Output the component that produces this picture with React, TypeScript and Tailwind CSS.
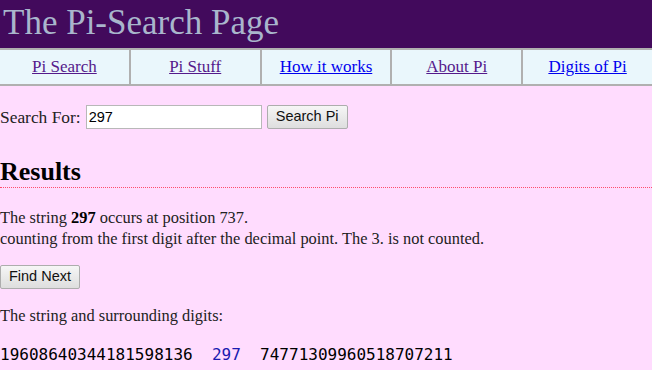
const navItems = [
  { label: "Pi Search", visited: true },
  { label: "Pi Stuff", visited: true },
  { label: "How it works", visited: false },
  { label: "About Pi", visited: true },
  { label: "Digits of Pi", visited: false },
];

const serif = "font-['Liberation_Serif','Times_New_Roman',serif]";
const sans = "font-['Liberation_Sans',Arial,sans-serif]";

export default function App() {
  return (
    <div className={`min-h-[370px] w-[652px] bg-[#ffdcfe] text-black ${serif}`}>
      <header className="h-12 bg-[#420a5c] pl-[3px]">
        <h1 className="text-[35px] leading-[46px] text-[#a9b6cc]">The Pi-Search Page</h1>
      </header>

      <nav className="flex h-[38px] border-y-2 border-[#b0b0b0] bg-[#eaf7fc]">
        {navItems.map((item, i) => (
          <a
            key={item.label}
            href="#"
            className={`flex flex-1 items-center justify-center text-[17px] underline ${
              i > 0 ? "border-l-2 border-[#b0b0b0]" : ""
            } ${item.visited ? "text-[#551a8b]" : "text-[#0000ee]"}`}
          >
            {item.label}
          </a>
        ))}
      </nav>

      <form className="mt-[18px] flex items-center gap-[5px]">
        <label className="text-[17.4px] text-[#222]">Search For:</label>
        <input
          defaultValue="297"
          className={`h-6 w-[176px] border border-[#b8b8b8] bg-white px-[2px] text-[14.5px] text-black outline-none ${sans}`}
        />
        <button
          type="button"
          className={`h-6 w-[81px] rounded-[2px] border border-[#adadad] bg-gradient-to-b from-[#f6f6f6] to-[#dedede] text-[14.5px] text-[#111] ${sans}`}
        >
          Search Pi
        </button>
      </form>

      <h2 className="mt-[27px] border-b border-dotted border-[#ff4d6d] text-[26px] font-bold leading-[30px]">
        Results
      </h2>

      <p className="mt-[19px] text-[16.4px] leading-[21px] text-[#222]">
        The string <b className="text-black">297</b> occurs at position 737.
        <br />
        counting from the first digit after the decimal point. The 3. is not counted.
      </p>

      <button
        type="button"
        className={`mt-[16px] h-6 w-[80px] rounded-[2px] border border-[#adadad] bg-gradient-to-b from-[#f6f6f6] to-[#dedede] text-[14.5px] text-[#111] ${sans}`}
      >
        Find Next
      </button>

      <p className="mt-[16px] text-[16.4px] leading-[21px] text-[#222]">The string and surrounding digits:</p>

      <pre className="mt-[19px] font-['DejaVu_Sans_Mono',monospace] text-base leading-[20px] text-black">
        19608640344181598136  <span className="text-[#1a1ab0]">297</span>  74771309960518707211
      </pre>
    </div>
  );
}
